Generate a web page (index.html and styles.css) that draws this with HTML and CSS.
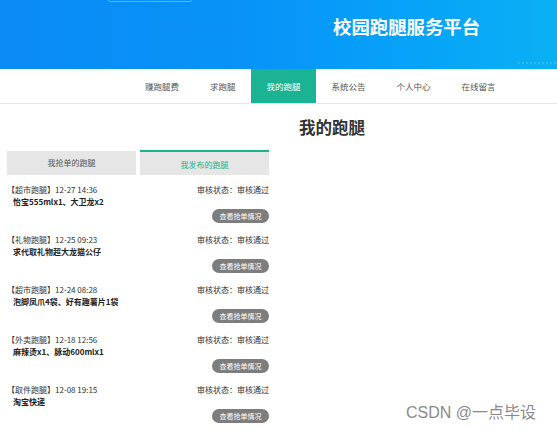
FILE: index.html
```html
<!DOCTYPE html>
<html lang="zh">
<head>
<meta charset="utf-8">
<link rel="stylesheet" href="styles.css">
</head>
<body>
<header class="banner">
  <div class="banner-box"></div>
  <div class="dots dots-a"></div>
  <div class="dots dots-b"></div>
  <div class="dots dots-c"></div>
  <h1 class="site-title">校园跑腿服务平台</h1>
</header>
<nav class="nav">
  <a class="nav-item">赚跑腿费</a>
  <a class="nav-item">求跑腿</a>
  <a class="nav-item active">我的跑腿</a>
  <a class="nav-item">系统公告</a>
  <a class="nav-item">个人中心</a>
  <a class="nav-item">在线留言</a>
</nav>
<main class="main">
  <h2 class="page-title">我的跑腿</h2>
  <section class="panel">
    <div class="tabs">
      <div class="tab">我抢单的跑腿</div>
      <div class="tab tab-on">我发布的跑腿</div>
    </div>
    <ul class="list">
      <li class="item">
        <div class="row1"><span class="meta">【超市跑腿】12-27 14:36</span><span class="status">审核状态：审核通过</span></div>
        <div class="row2">怡宝555mlx1、大卫龙x2</div>
        <div class="row3"><span class="btn">查看抢单情况</span></div>
      </li>
      <li class="item">
        <div class="row1"><span class="meta">【礼物跑腿】12-25 09:23</span><span class="status">审核状态：审核通过</span></div>
        <div class="row2">求代取礼物超大龙猫公仔</div>
        <div class="row3"><span class="btn">查看抢单情况</span></div>
      </li>
      <li class="item">
        <div class="row1"><span class="meta">【超市跑腿】12-24 08:28</span><span class="status">审核状态：审核通过</span></div>
        <div class="row2">泡脚凤爪4袋、好有趣薯片1袋</div>
        <div class="row3"><span class="btn">查看抢单情况</span></div>
      </li>
      <li class="item">
        <div class="row1"><span class="meta">【外卖跑腿】12-18 12:56</span><span class="status">审核状态：审核通过</span></div>
        <div class="row2">麻辣烫x1、脉动600mlx1</div>
        <div class="row3"><span class="btn">查看抢单情况</span></div>
      </li>
      <li class="item">
        <div class="row1"><span class="meta">【取件跑腿】12-08 19:15</span><span class="status">审核状态：审核通过</span></div>
        <div class="row2">淘宝快递</div>
        <div class="row3"><span class="btn">查看抢单情况</span></div>
      </li>
    </ul>
  </section>
</main>
<div class="watermark">CSDN @一点毕设</div>
</body>
</html>
```

FILE: styles.css
```css
* { box-sizing: border-box; }
html, body { margin: 0; padding: 0; }
body {
  width: 557px;
  height: 432px;
  overflow: hidden;
  background: #fff;
  font-family: "Noto Sans CJK SC", "Noto Sans", sans-serif;
  color: #333;
  position: relative;
}
.banner {
  position: relative;
  height: 69px;
  background: linear-gradient(90deg, #0a8bf6 0%, #0893f8 45%, #06a3f8 75%, #0bb0f4 100%);
  overflow: hidden;
}
.banner-box {
  position: absolute;
  left: 108px;
  top: -20px;
  width: 84px;
  height: 22px;
  border: 1px solid #18d2ff;
  border-top: none;
  border-radius: 0 0 2px 2px;
}
.dots {
  position: absolute;
  height: 4px;
  background-image: radial-gradient(circle, rgba(40,130,230,0.35) 0.8px, transparent 1.2px);
  background-size: 4px 4px;
}
.dots-a { left: 160px; top: 24px; width: 80px; }
.dots-b { left: 190px; top: 42px; width: 50px; }
.dots-c { left: 517px; top: 61px; width: 40px; background-image: radial-gradient(circle, rgba(70,200,250,0.5) 0.8px, transparent 1.2px); }
.site-title {
  position: absolute;
  left: 333px;
  top: 14px;
  margin: 0;
  font-size: 18.4px;
  line-height: 24px;
  font-weight: 700;
  color: #fff;
  letter-spacing: 0;
}
.nav {
  display: flex;
  height: 35px;
  padding-left: 129.5px;
  border-bottom: 1px solid #e6e6e6;
}
.nav-item {
  padding: 0 15.5px;
  font-size: 8.5px;
  line-height: 34px;
  color: #555;
  white-space: nowrap;
}
.nav-item.active {
  background: #1ab394;
  color: #fff;
}
.main {
  padding: 0 0 0 7px;
}
.page-title {
  margin: 0;
  padding: 12px 0 0 292px;
  font-size: 16.5px;
  line-height: 22px;
  font-weight: 700;
  color: #333;
}
.panel {
  width: 262px;
  margin-top: 12px;
}
.tabs {
  display: flex;
  gap: 4px;
}
.tab {
  flex: 1;
  height: 24px;
  margin-top: 1px;
  background: #e6e6e6;
  font-size: 8px;
  line-height: 24px;
  text-align: center;
  color: #555;
}
.tab-on {
  margin-top: 0;
  height: 25px;
  border-top: 2px solid #1ab394;
  color: #1ab394;
  line-height: 25px;
}
.list {
  list-style: none;
  margin: 9px 0 0;
  padding: 0;
}
.item {
  height: 50px;
}
.row1 {
  display: flex;
  justify-content: space-between;
  font-size: 8px;
  line-height: 12px;
  color: #333;
}
.row2 {
  padding-left: 6px;
  font-size: 8px;
  line-height: 12px;
  font-weight: 700;
  color: #222;
}
.row3 {
  display: flex;
  justify-content: flex-end;
  margin-top: 1px;
}
.btn {
  display: block;
  width: 57px;
  height: 14px;
  border-radius: 7px;
  background: #7d7d7d;
  color: #fff;
  font-size: 7px;
  line-height: 14px;
  text-align: center;
}
.watermark {
  position: absolute;
  left: 406px;
  top: 403px;
  font-family: "Liberation Sans", "Noto Sans CJK SC", sans-serif;
  font-size: 16px;
  line-height: 20px;
  color: #8a8a8a;
  white-space: nowrap;
}
```
